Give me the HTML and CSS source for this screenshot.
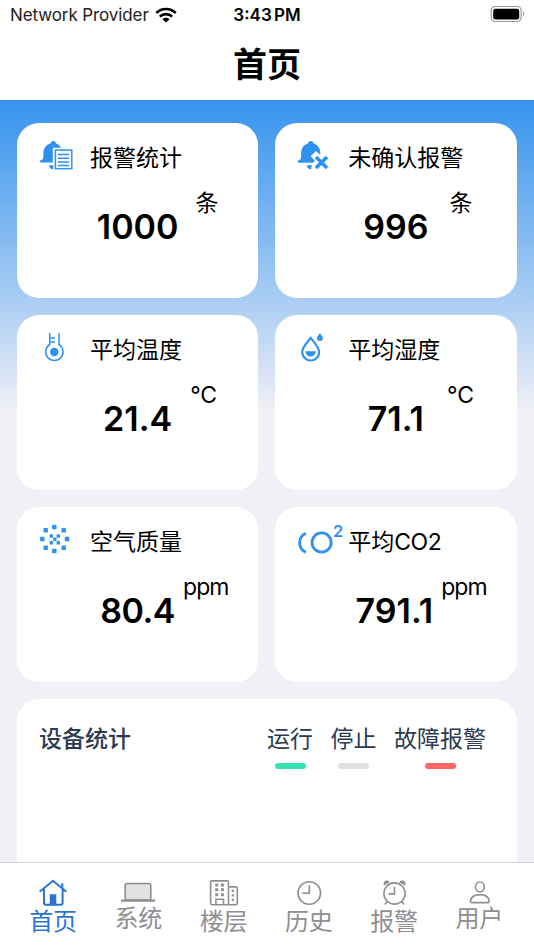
FILE: index.html
```html
<!DOCTYPE html>
<html lang="zh-CN">
<head>
  <meta charset="UTF-8">
  <meta name="viewport" content="width=device-width, initial-scale=1">
  <title>首页</title>
  <link rel="stylesheet" href="styles.css">
</head>
<body>

  <div class="status-bar">
    <div class="carrier">
      <span>Network Provider</span>
      <svg width="22" height="16" viewBox="0 0 22 16">
        <g fill="none" stroke="#000" stroke-width="2.6">
          <path d="M1.3 6A13.6 13.6 0 0 1 20.7 6"/>
          <path d="M4.8 9.7a8.8 8.8 0 0 1 12.4 0"/>
        </g>
        <path d="M7.5 12.2a5 5 0 0 1 7 0L11 15.6z"/>
      </svg>
    </div>
    <div class="time">3:43 PM</div>
    <svg class="battery" width="36" height="18" viewBox="0 0 36 18">
      <rect x="1.2" y="1.5" width="30" height="15" rx="4" fill="none" stroke="#999" stroke-width="1.2"/>
      <rect x="3.2" y="3.7" width="26" height="10.8" rx="2.2"/>
      <path d="M33 6.8c1.7.6 1.7 3.8 0 4.4z" fill="#999"/>
    </svg>
  </div>

  <header class="nav-bar">
    <h1>首页</h1>
  </header>

  <main class="content">
    <div class="cards">

      <section class="card">
        <div class="card-head">
          <svg class="icon" viewBox="0 0 52 36">
            <path d="M15.3 1c1.6 0 2.7 1.1 2.7 2.6 2.2.6 4 2 5 4.1h-8.2v14.8H2v-1.7c2.4-.8 3.4-2 3.4-4.3v-3.3c0-4.9 2.7-8.5 7.2-9.6C12.600 2.100 13.700 1 15.300 1zM11 25.200h4.300v4c-2.700-.1-4.300-1.600-4.300-4z"/>
            <rect class="line" x="17.400" y="10.100" width="16.400" height="18.600"/>
            <path class="line" d="M19.800 14.600h11.400M19.800 18.300h11.400M19.800 22h11.400M19.800 25.400h11.400"/>
          </svg>
          <span>报警统计</span>
        </div>
        <div class="reading">
          <strong>1000</strong>
          <span class="unit unit-count">条</span>
        </div>
      </section>

      <section class="card">
        <div class="card-head">
          <svg class="icon" viewBox="0 0 52 36">
            <path d="M14.800 1c1.600 0 2.700 1.100 2.700 2.600 4 1 6.700 4.500 6.700 9.100v2.100L20 11l-5.300 5.300 4.200 4.500-1.800 1.900H1.800v-1.900c2.400-.8 3.400-2 3.400-4.300v-3.800c0-4.600 2.800-8.100 6.900-9.100C12.100 2.100 13.200 1 14.800 1zM10.800 25.200h4.100c1.500 0 1.300 1.800.3 1.800v2.200c-2.700 0-4.400-1.600-4.400-4z"/>
            <path d="M20 17l11 11M31 17L20 28" fill="none" stroke="#2f92f0" stroke-width="3.600"/>
          </svg>
          <span>未确认报警</span>
        </div>
        <div class="reading">
          <strong>996</strong>
          <span class="unit unit-count-wide">条</span>
        </div>
      </section>

      <section class="card">
        <div class="card-head">
          <svg class="icon" viewBox="0 0 52 36">
            <path class="line" d="M11.700 1v11.500a8.700 8.700 0 1 0 9.300 0V1M11.700 6H17M11.700 10H17"/>
            <circle cx="16.350" cy="20" r="4.300"/>
          </svg>
          <span>平均温度</span>
        </div>
        <div class="reading">
          <strong>21.4</strong>
          <span class="unit unit-temp">°C</span>
        </div>
      </section>

      <section class="card">
        <div class="card-head">
          <svg class="icon" viewBox="0 0 52 36">
            <path d="M14.700 6C11.500 10 6.200 15.500 6.200 20a8.500 8.500 0 0 0 17 0C23.200 15.500 18 10 14.700 6z" fill="none" stroke="#2f92f0" stroke-width="2.200"/>
            <path d="M9.400 19.300h10.400a5.200 5.200 0 0 1-10.400 0z"/>
            <path d="M23.900 1.200c1.200 1.800 3 3.300 3 4.800a3 3 0 0 1-6 0c0-1.500 1.800-3 3-4.800z"/>
          </svg>
          <span>平均湿度</span>
        </div>
        <div class="reading">
          <strong>71.1</strong>
          <span class="unit unit-humidity">°C</span>
        </div>
      </section>

      <section class="card">
        <div class="card-head">
          <svg class="icon" viewBox="0 0 52 36">
            <rect x="14.100" y=".8" width="4.400" height="4.400" rx=".6"/>
            <rect x="23.500" y="4.100" width="4.400" height="4.400" rx=".6"/>
            <rect x="26.800" y="12.800" width="4.400" height="4.400" rx=".6"/>
            <rect x="23.500" y="21.500" width="4.400" height="4.400" rx=".6"/>
            <rect x="14.100" y="24.800" width="4.400" height="4.400" rx=".6"/>
            <rect x="5.500" y="21.500" width="4.400" height="4.400" rx=".6"/>
            <rect x="2.100" y="12.800" width="4.400" height="4.400" rx=".6"/>
            <rect x="5.500" y="4.100" width="4.400" height="4.400" rx=".6"/>
            <rect x="11.600" y="10.300" width="3.400" height="3.400" rx=".5"/>
            <rect x="18.600" y="10.300" width="3.400" height="3.400" rx=".5"/>
            <rect x="15.100" y="13.600" width="3.400" height="3.400" rx=".5"/>
            <rect x="11.600" y="17" width="3.400" height="3.400" rx=".5"/>
            <rect x="18.600" y="17" width="3.400" height="3.400" rx=".5"/>
          </svg>
          <span>空气质量</span>
        </div>
        <div class="reading">
          <strong class="tight">80.4</strong>
          <span class="unit unit-ppm">ppm</span>
        </div>
      </section>

      <section class="card">
        <div class="card-head">
          <svg class="icon" viewBox="0 0 52 36">
            <g fill="none" stroke="#2f92f0" stroke-width="2.800">
              <path d="M9.800 9.200a10.400 10.400 0 0 0 0 19"/>
              <circle cx="25.600" cy="18.500" r="9.600"/>
            </g>
            <text class="sup" x="37" y="13.400">2</text>
          </svg>
          <span>平均<span class="latin">CO2</span></span>
        </div>
        <div class="reading reading-long">
          <strong>791.1</strong>
          <span class="unit unit-ppm">ppm</span>
        </div>
      </section>

    </div>

    <section class="devices">
      <h2>设备统计</h2>
      <ul class="legend">
        <li class="running">运行</li>
        <li class="stopped">停止</li>
        <li class="fault">故障报警</li>
      </ul>
    </section>
  </main>

  <nav class="tab-bar">
    <a class="tab active">
      <svg viewBox="0 0 34 29">
        <path d="M3.700 13.700L17 2.700l13.300 11M8 11v13.700q0 2 2 2h14.600q2 0 2-2V11M26.300 10V5.200"/>
        <path class="solid" d="M13.700 16.300h6.600v10.400h-6.600z"/>
      </svg>
      <span>首页</span>
    </a>
    <a class="tab short">
      <svg viewBox="0 0 34 26">
        <path class="screen" d="M4.200 22V7.500q0-2 2-2h21.600q2 0 2 2V22z"/>
        <path class="base" d="M0 22.700h34"/>
      </svg>
      <span>系统</span>
    </a>
    <a class="tab">
      <svg viewBox="0 0 34 29">
        <path d="M21.500 26.800H5.200q-1.600 0-1.600-1.600V4.500q0-1.600 1.600-1.600h14.700q1.600 0 1.600 1.600zM21.500 8.900h7.200q1.600 0 1.600 1.600v14.700q0 1.600-1.600 1.600h-7.200M8.900 26.800v-5.500h7.600v5.500"/>
        <path class="solid" d="M8.200 5.500h3v3h-3zM13.900 5.500h3v3h-3zM8.200 10.300h3v3h-3zM13.900 10.300h3v3h-3zM8.200 15.200h3v3h-3zM13.900 15.200h3v3h-3zM24.700 11.700h2.200v2.200h-2.200zM24.700 16.200h2.200v2.200h-2.200zM24.700 20.700h2.200v2.200h-2.200z"/>
      </svg>
      <span>楼层</span>
    </a>
    <a class="tab">
      <svg viewBox="0 0 34 29">
        <circle cx="17.300" cy="15" r="11.300"/>
        <path d="M17.300 7.200v8h-7"/>
      </svg>
      <span>历史</span>
    </a>
    <a class="tab">
      <svg viewBox="0 0 34 29">
        <circle cx="17.500" cy="15.500" r="10.600"/>
        <path d="M17.500 8.700v7.200h-6M10.300 23.500l-2.500 3M24.700 23.500l2.500 3"/>
        <path class="solid" d="M7.200 7.600C5.500 5 7.500 2.500 9.700 2.500c1.600 0 2.700.7 3 1.700zM27.800 7.600c1.700-2.600-.3-5.100-2.500-5.100-1.600 0-2.700.7-3 1.700z"/>
      </svg>
      <span>报警</span>
    </a>
    <a class="tab short">
      <svg viewBox="0 0 34 26">
        <ellipse cx="17.900" cy="8.900" rx="4.400" ry="4.900"/>
        <path d="M10 24.600q-1.700 0-1.500-1.700c.7-4 4.600-6.300 9.400-6.300s8.700 2.300 9.400 6.300q.2 1.700-1.500 1.700z"/>
      </svg>
      <span>用户</span>
    </a>
  </nav>

</body>
</html>
```

FILE: styles.css
```css
:root {
  --blue: #2f92f0;
  --tab-active: #2b74d2;
  --grey: #8e8e93;
  --page: #f1f0f6;
  --ink: #2c3a52;
}

* {
  box-sizing: border-box;
}

body {
  margin: 0;
  height: 950px;
  display: flex;
  flex-direction: column;
  overflow: hidden;
  background-color: white;
  color: #000;
  font-family: Inter, "Noto Sans CJK SC", sans-serif;
}

/* status + title */

.status-bar {
  height: 30px;
  padding: 0 8px 0 10px;
  display: grid;
  grid-template-columns: 1fr auto 1fr;
  align-items: center;
  font-size: 17px;
  line-height: 30px;
}

.carrier {
  display: flex;
  align-items: center;
  gap: 6px;
  white-space: nowrap;
  color: #222;
  letter-spacing: -0.1px;
}

.carrier svg {
  margin-top: -1px;
}

.time {
  padding-right: 2px;
  font-weight: 600;
  word-spacing: -2px;
}

.battery {
  justify-self: end;
  margin-top: -2px;
}

.nav-bar {
  height: 70px;
  display: flex;
  align-items: center;
  justify-content: center;
}

h1 {
  margin: 0;
  font-size: 34px;
  line-height: 48px;
  font-weight: 700;
}

/* dashboard */

.content {
  flex: 1;
  min-height: 0;
  overflow: hidden;
  padding: 22.5px 17.5px 0 17px;
  background: linear-gradient(#3693ee 0, #a9cdf3 200px, var(--page) 312px);
}

.cards {
  display: grid;
  grid-template-columns: 1fr 1fr;
  gap: 17px;
}

.card {
  height: 175px;
  padding: 17px 0 0 21px;
  background-color: white;
  border-radius: 22px;
}

.card-head {
  height: 36px;
  display: flex;
  align-items: center;
  font-size: 23px;
  line-height: 36px;
  white-space: nowrap;
}

.latin {
  letter-spacing: -0.5px;
}

.icon {
  width: 52px;
  height: 36px;
  flex: none;
  overflow: visible;
  fill: var(--blue);
}

.icon .line {
  fill: none;
  stroke: var(--blue);
  stroke-width: 1.5;
}

.icon .sup {
  font-size: 16.5px;
  font-weight: 600;
}

.reading {
  margin: 10px 0 0 -21px;
  display: grid;
  grid-template-columns: 1fr auto 1fr;
}

.reading-long {
  margin-left: -24px;
}

.reading strong {
  grid-column: 2;
  padding-top: 20px;
  font-size: 34px;
  line-height: 42px;
  font-weight: 600;
}

.reading .tight {
  letter-spacing: -0.5px;
}

.unit {
  font-size: 23px;
  line-height: 34px;
}

.unit-count {
  margin-left: 17px;
}

.unit-count-wide {
  margin-left: 21px;
}

.unit-temp {
  margin-left: 18px;
}

.unit-humidity {
  margin-left: 23px;
}

.unit-ppm {
  margin-left: 8px;
  letter-spacing: -0.9px;
}

.devices {
  height: 300px;
  margin-top: 17px;
  padding: 23px 30.5px 0 22px;
  display: flex;
  justify-content: space-between;
  align-items: flex-start;
  background-color: white;
  border-radius: 22px;
  color: var(--ink);
}

h2 {
  margin: 0;
  font-size: 23px;
  line-height: 34px;
  font-weight: 500;
}

.legend {
  margin: 0;
  padding: 0;
  display: flex;
  gap: 17.5px;
  list-style: none;
  font-size: 23px;
  line-height: 34px;
}

.legend li::after {
  content: "";
  display: block;
  width: 31px;
  height: 6px;
  margin: 7px auto 0;
  border-radius: 3px;
}

.running::after {
  background-color: #36e2b0;
}

.stopped::after {
  background-color: #dfe0e2;
}

.fault::after {
  background-color: #ff6666;
}

/* bottom tabs */

.tab-bar {
  height: 88px;
  flex: none;
  padding: 15px 12px 0 10.5px;
  display: grid;
  grid-template-columns: repeat(6, 1fr);
  border-top: 1px solid #d3d3d7;
  background-color: white;
}

.tab {
  display: flex;
  flex-direction: column;
  align-items: center;
  color: var(--grey);
  font-size: 24px;
  line-height: 30px;
}

.tab svg {
  width: 34px;
  height: 29px;
  fill: none;
  stroke: currentColor;
  stroke-width: 1.6;
}

.tab.short svg {
  height: 26px;
}

.tab .solid {
  fill: currentColor;
  stroke: none;
}

.tab .screen {
  fill: #e1e1e2;
}

.tab .base {
  stroke-width: 2.2;
}

.active {
  color: var(--tab-active);
}

.active svg {
  stroke-width: 2;
}
```
